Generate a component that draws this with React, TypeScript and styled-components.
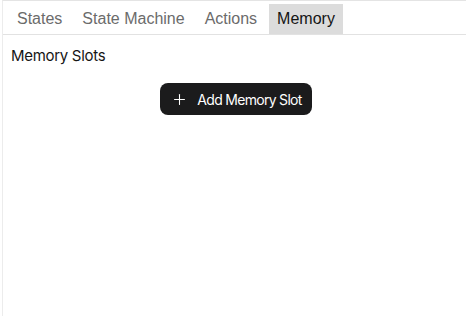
import React, { useState } from "react";
import styled, { createGlobalStyle } from "styled-components";
import { Plus } from "lucide-react";

const GlobalStyle = createGlobalStyle`
  html, body {
    margin: 0;
    padding: 0;
    background: #ffffff;
  }
  #root {
    height: 316px;
  }
`;

const Panel = styled.div`
  height: 100%;
  box-sizing: border-box;
  margin-left: 2px;
  border-left: 1px solid #ececec;
  border-top: 1px solid #e4e4e4;
  display: flex;
  flex-direction: column;
`;

const TabBar = styled.div`
  display: flex;
  gap: 4px;
  padding: 3px 0 0 6px;
  border-bottom: 1px solid #e2e2e2;
`;

const Tab = styled.button<{ active: boolean }>`
  border: none;
  margin: 0;
  height: 30px;
  padding: 0 8px;
  font-family: "Liberation Sans", Arial, sans-serif;
  font-size: 16px;
  color: ${(props) => (props.active ? "#141414" : "#6b6b6b")};
  background-color: ${(props) => (props.active ? "#dcdcdc" : "transparent")};
  cursor: pointer;
`;

const Content = styled.div`
  padding: 11px 5px 10px 8px;
  display: flex;
  flex-direction: column;
  font-family: Inter, "Noto Sans", sans-serif;
`;

const Heading = styled.div`
  font-size: 15px;
  line-height: 20px;
  color: #161616;
  letter-spacing: -0.3px;
`;

const ButtonRow = styled.div`
  display: flex;
  justify-content: center;
  margin-top: 17px;
`;

const AddButton = styled.button`
  display: flex;
  align-items: center;
  gap: 9px;
  height: 32px;
  padding: 0 10px 0 11px;
  border: none;
  border-radius: 8px;
  background-color: #1b1b1c;
  color: #ffffff;
  font-family: Inter, "Noto Sans", sans-serif;
  font-size: 14px;
  letter-spacing: -0.7px;
  cursor: pointer;
`;

const TABS = ["States", "State Machine", "Actions", "Memory"];

function App() {
  const [tab, setTab] = useState("Memory");
  return (
    <>
      <GlobalStyle />
      <Panel>
        <TabBar>
          {TABS.map((name) => (
            <Tab key={name} active={tab === name} onClick={() => setTab(name)}>
              {name}
            </Tab>
          ))}
        </TabBar>
        <Content>
          <Heading>Memory Slots</Heading>
          <ButtonRow>
            <AddButton>
              <Plus size={17} strokeWidth={1.5} />
              Add Memory Slot
            </AddButton>
          </ButtonRow>
        </Content>
      </Panel>
    </>
  );
}

export default App;
